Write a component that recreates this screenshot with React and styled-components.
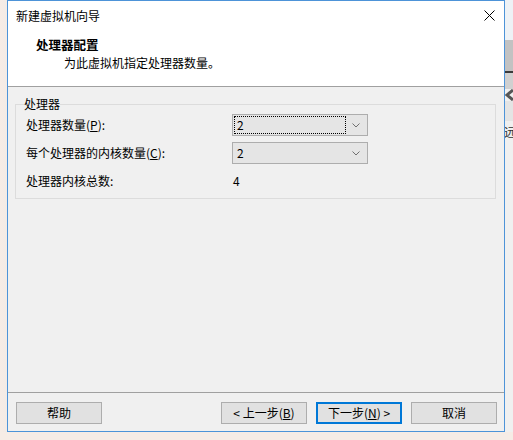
import React from "react";
import styled, { createGlobalStyle } from "styled-components";

const GlobalStyle = createGlobalStyle`
  *, *::before, *::after {
    box-sizing: border-box;
  }
  html, body {
    margin: 0;
    padding: 0;
    background: #f6ece6;
  }
  body {
    font-family: "Noto Sans CJK SC", "Noto Sans", sans-serif;
    font-size: 12px;
    color: #000;
  }
`;

const Page = styled.div`
  display: flex;
  align-items: flex-start;
  width: 513px;
  height: 440px;
  overflow: hidden;
`;

const Shadow = styled.div`
  width: 7px;
  height: 432px;
  flex: none;
  background: linear-gradient(to right, #f6ece6, #f3ebe6);
`;

const Window = styled.div`
  width: 498px;
  height: 432px;
  flex: none;
  border: 1px solid #4d93d8;
  background: #fff;
  display: flex;
  flex-direction: column;
`;

const TitleBar = styled.div`
  height: 29px;
  flex: none;
  display: flex;
  align-items: center;
  justify-content: space-between;
  padding-left: 8px;
  line-height: 16px;
`;

const CloseButton = styled.div`
  width: 30px;
  height: 29px;
  display: flex;
  align-items: center;
  justify-content: center;
`;

const Header = styled.div`
  height: 57px;
  flex: none;
  border-bottom: 1px solid #a0a0a0;
  padding: 7px 0 0 28px;
  line-height: 16px;
`;

const HeaderTitle = styled.div`
  font-weight: bold;
  font-size: 12.5px;
`;

const HeaderSub = styled.div`
  margin: 2px 0 0 28px;
`;

const Body = styled.div`
  flex: 1;
  background: #f0f0f0;
  padding: 9px 8px 0 7px;
`;

const Group = styled.fieldset`
  margin: 0;
  padding: 2px 10px 6px 10px;
  border: 1px solid #dcdcdc;
  min-width: 0;
`;

const GroupLabel = styled.legend`
  padding: 0;
  margin-left: -2px;
  line-height: 16px;
`;

const Grid = styled.div`
  display: grid;
  grid-template-columns: 206px auto;
  grid-auto-rows: 22px;
  row-gap: 6px;
  align-items: center;
  line-height: 16px;
`;

const Value = styled.div`
  padding-left: 1px;
`;

const Combo = styled.div`
  width: 136px;
  height: 22px;
  border: 1px solid #adadad;
  background: #e5e5e5;
  display: flex;
  align-items: center;
  padding: 1px;
`;

const ComboText = styled.div`
  flex: 1;
  height: 18px;
  padding-left: 2px;
  line-height: 16px;
  border: 1px dotted ${(p) => (p.focused ? "#000" : "transparent")};
`;

const Chevron = styled.div`
  width: 20px;
  display: flex;
  justify-content: center;
`;

const Key = styled.span`
  text-decoration: underline;
  text-underline-offset: 1px;
`;

const Footer = styled.div`
  height: 39px;
  flex: none;
  border-top: 1px solid #a0a0a0;
  background: #f0f0f0;
  display: flex;
  align-items: flex-start;
  padding: 9px 7px 0 8px;
  gap: 9px;
`;

const Button = styled.div`
  width: 86px;
  height: 22px;
  border: ${(p) => (p.primary ? "2px solid #0078d7" : "1px solid #adadad")};
  background: #e1e1e1;
  display: flex;
  align-items: center;
  justify-content: center;
  line-height: 16px;
  margin-left: ${(p) => (p.push ? "auto" : "0")};
`;

const Strip = styled.div`
  width: 8px;
  height: 432px;
  flex: none;
  display: flex;
  flex-direction: column;
  background: #f0f0f0;
  overflow: hidden;
`;

const StripPart = styled.div`
  height: ${(p) => p.h}px;
  flex: none;
  background: ${(p) => p.bg};
`;

const StripGlyph = styled.div`
  height: 22px;
  line-height: 22px;
  font-size: 12px;
  margin-left: -1px;
  color: #333;
  white-space: nowrap;
`;

const ChevronIcon = () => (
  <svg width="8" height="5" viewBox="0 0 8 5">
    <path d="M0.5 0.5 L4 4 L7.5 0.5" fill="none" stroke="#707070" strokeWidth="1" />
  </svg>
);

const CloseIcon = () => (
  <svg width="11" height="11" viewBox="0 0 11 11">
    <path d="M0.5 0.5 L10.5 10.5 M10.5 0.5 L0.5 10.5" stroke="#000" strokeWidth="1" />
  </svg>
);

const ArrowIcon = () => (
  <svg width="8" height="12" viewBox="0 0 8 12">
    <path d="M8 1 L2 6 L8 11" fill="none" stroke="#555" strokeWidth="3" />
  </svg>
);

export default function App() {
  return (
    <>
      <GlobalStyle />
      <Page>
        <Shadow />
        <Window>
          <TitleBar>
            <span>新建虚拟机向导</span>
            <CloseButton>
              <CloseIcon />
            </CloseButton>
          </TitleBar>
          <Header>
            <HeaderTitle>处理器配置</HeaderTitle>
            <HeaderSub>为此虚拟机指定处理器数量。</HeaderSub>
          </Header>
          <Body>
            <Group>
              <GroupLabel>处理器</GroupLabel>
              <Grid>
                <div>
                  处理器数量(<Key>P</Key>):
                </div>
                <Combo>
                  <ComboText focused>2</ComboText>
                  <Chevron>
                    <ChevronIcon />
                  </Chevron>
                </Combo>
                <div>
                  每个处理器的内核数量(<Key>C</Key>):
                </div>
                <Combo>
                  <ComboText>2</ComboText>
                  <Chevron>
                    <ChevronIcon />
                  </Chevron>
                </Combo>
                <div>处理器内核总数:</div>
                <Value>4</Value>
              </Grid>
            </Group>
          </Body>
          <Footer>
            <Button>帮助</Button>
            <Button push>
              &lt; 上一步(<Key>B</Key>)
            </Button>
            <Button primary>
              下一步(<Key>N</Key>) &gt;
            </Button>
            <Button>取消</Button>
          </Footer>
        </Window>
        <Strip>
          <StripPart h={40} bg="#eef2f6" />
          <StripPart h={31} bg="#c2c2c2" />
          <StripPart h={2} bg="#3a3a3a" />
          <StripPart h={16} bg="#d0d0d0" />
          <ArrowIcon />
          <StripPart h={20} bg="#e4e4e4" />
          <StripGlyph>远</StripGlyph>
        </Strip>
      </Page>
    </>
  );
}
